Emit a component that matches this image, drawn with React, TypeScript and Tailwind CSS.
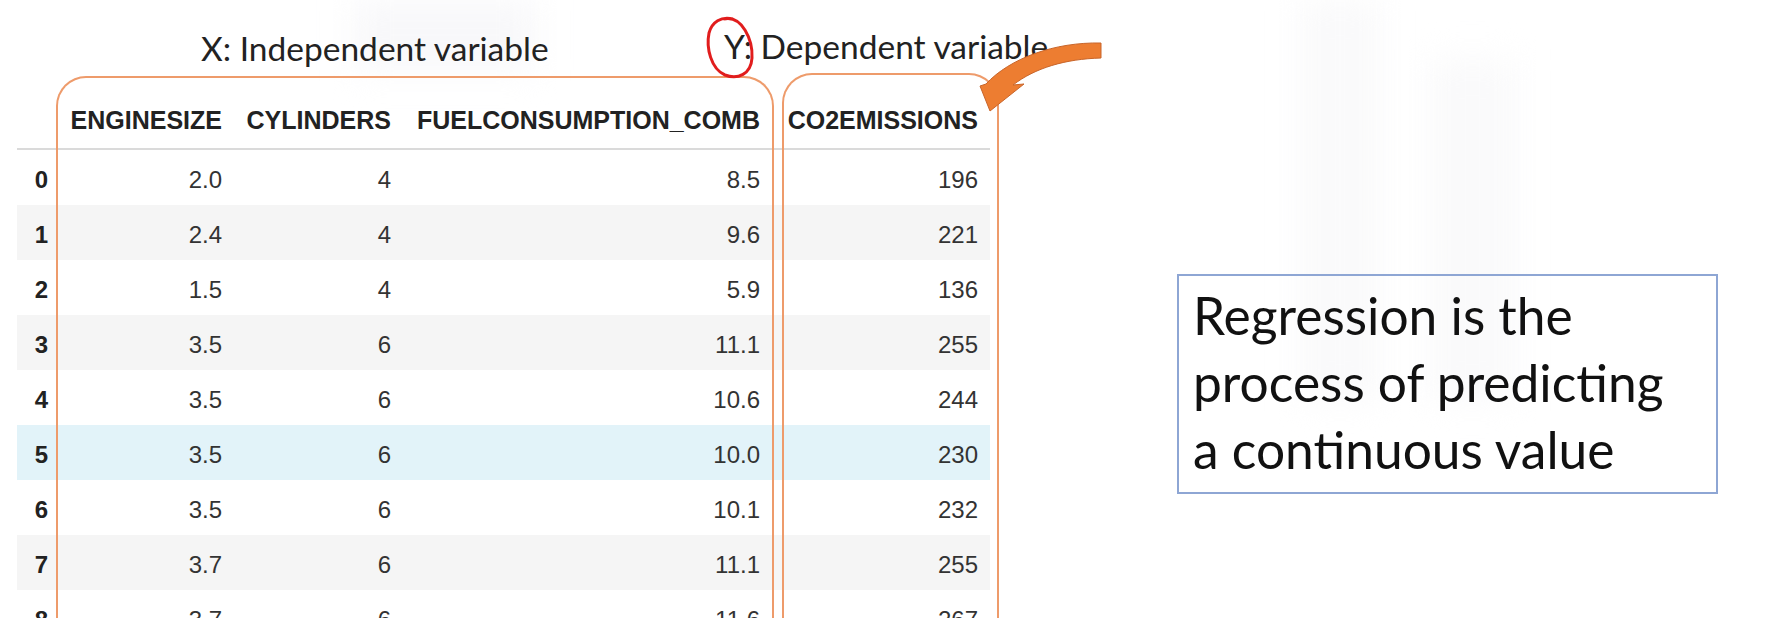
import React from "react";

const rows = [
  ["0", "2.0", "4", "8.5", "196"],
  ["1", "2.4", "4", "9.6", "221"],
  ["2", "1.5", "4", "5.9", "136"],
  ["3", "3.5", "6", "11.1", "255"],
  ["4", "3.5", "6", "10.6", "244"],
  ["5", "3.5", "6", "10.0", "230"],
  ["6", "3.5", "6", "10.1", "232"],
  ["7", "3.7", "6", "11.1", "255"],
  ["8", "3.7", "6", "11.6", "267"],
];

const cellWidths = ["w-[31px]", "w-[174px]", "w-[169px]", "w-[369px]", "w-[218px]"];

function rowBg(i: number) {
  if (i === 5) return "bg-[#e2f3f9]";
  return i % 2 === 1 ? "bg-[#f5f5f5]" : "bg-white";
}

function DataTable() {
  return (
    <div className="w-[973px] font-['Liberation_Sans',Arial,sans-serif]">
      <div className="flex h-[56px] items-center border-b-2 border-[#dadada] text-[25px] font-bold text-[#222]">
        <div className={cellWidths[0]} />
        <div className={`${cellWidths[1]} text-right`}>ENGINESIZE</div>
        <div className={`${cellWidths[2]} text-right`}>CYLINDERS</div>
        <div className={`${cellWidths[3]} text-right`}>FUELCONSUMPTION_COMB</div>
        <div className={`${cellWidths[4]} text-right`}>CO2EMISSIONS</div>
      </div>
      {rows.map((r, i) => (
        <div
          key={r[0]}
          className={`flex h-[55px] items-center pt-1 text-[24px] text-[#333] ${rowBg(i)}`}
        >
          <div className={`${cellWidths[0]} text-right font-bold text-[#222]`}>{r[0]}</div>
          <div className={`${cellWidths[1]} text-right`}>{r[1]}</div>
          <div className={`${cellWidths[2]} text-right`}>{r[2]}</div>
          <div className={`${cellWidths[3]} text-right`}>{r[3]}</div>
          <div className={`${cellWidths[4]} text-right`}>{r[4]}</div>
        </div>
      ))}
    </div>
  );
}

export default function App() {
  return (
    <div className="relative h-[618px] w-[1783px] overflow-hidden bg-white">
      {/* faint background shapes from the slide */}
      <div className="absolute left-[355px] top-0 h-[70px] w-[180px] bg-[#f8f8fa] blur-lg" />
      <div className="absolute left-[1300px] top-0 h-[400px] w-[80px] bg-[#fafafb] blur-lg" />
      <div className="absolute left-[1430px] top-[60px] h-[340px] w-[85px] bg-[#fafafb] blur-lg" />

      <div className="relative flex">
        <div className="w-[1007px] shrink-0 pl-[17px]">
          <div className="flex h-[94px] whitespace-nowrap font-['Lato',sans-serif] text-[33.5px] leading-[38px] text-[#222]">
            <div className="w-[707px] shrink-0 pl-[184px] pt-[29px]">X: Independent variable</div>
            <div className="shrink-0 pt-[27px]">Y: Dependent variable</div>
          </div>
          <DataTable />
        </div>
        <div className="ml-[170px] mt-[274px] h-[220px] w-[541px] shrink-0 whitespace-nowrap border-2 border-[#8ea6d4] pl-[14px] pt-[6px] font-['Lato',sans-serif] text-[51.5px] leading-[67px] text-[#111]">
          Regression is the
          <br />
          process of predicting
          <br />
          a continuous value
        </div>
      </div>

      {/* orange brackets around X and Y columns */}
      <div className="absolute left-[56px] top-[76px] h-[600px] w-[718px] rounded-t-[30px] border-2 border-b-0 border-[#ee9b6b]" />
      <div className="absolute left-[782px] top-[73px] h-[600px] w-[217px] rounded-t-[30px] border-2 border-b-0 border-[#ee9b6b]" />

      {/* annotations */}
      <svg className="absolute left-0 top-0" width="1783" height="618" viewBox="0 0 1783 618">
        <path
          d="M1101,43 C1055,42 1010,58 986,84 L980,86 L990,111 L1024,84 L1013,85 C1035,68 1065,59 1101,58 Z"
          fill="#ed7d31"
          stroke="#c8652a"
          strokeWidth="1"
        />
        <path
          d="M724,19 C742,15 753,40 752,58 C751,74 738,80 725,75 C711,69 706,48 709,33 C712,22 721,16 733,19"
          fill="none"
          stroke="#e11d1d"
          strokeWidth="3"
        />
      </svg>
    </div>
  );
}
